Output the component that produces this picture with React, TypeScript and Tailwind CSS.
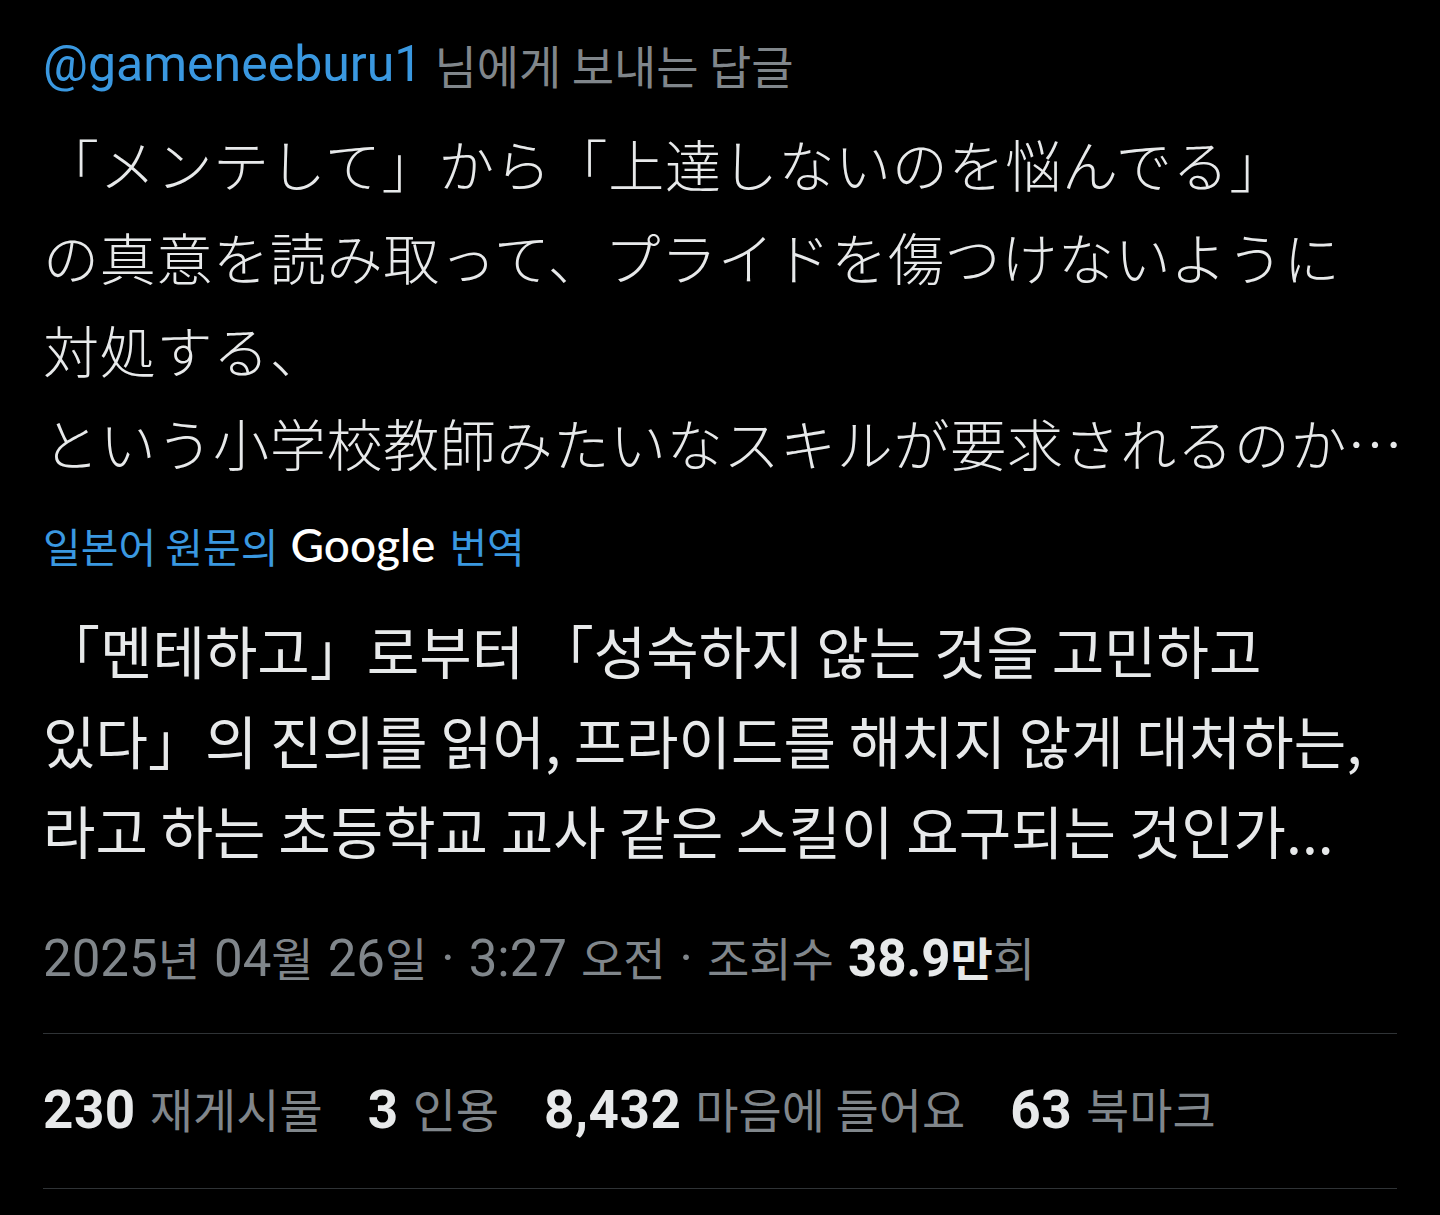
export default function App() {
  const jp = [
    "「メンテして」から「上達しないのを悩んでる」",
    "の真意を読み取って、プライドを傷つけないように",
    "対処する、",
    "という小学校教師みたいなスキルが要求されるのか…",
  ];
  const ko = [
    "「멘테하고」로부터 「성숙하지 않는 것을 고민하고",
    "있다」의 진의를 읽어, 프라이드를 해치지 않게 대처하는,",
    "라고 하는 초등학교 교사 같은 스킬이 요구되는 것인가...",
  ];
  const stats = [
    { n: "230", label: "재게시물" },
    { n: "3", label: "인용" },
    { n: "8,432", label: "마음에 들어요" },
    { n: "63", label: "북마크" },
  ];
  const num = "font-['Roboto',sans-serif] text-[51px]";
  const kr = "font-['Noto_Sans_CJK_KR',sans-serif] text-[46px]";
  return (
    <div className="min-h-[1215px] w-[1440px] bg-black px-[43px] pt-[36px] font-['Roboto','Noto_Sans_CJK_KR',sans-serif] text-[#e7e9ea]">
      <div className="flex items-center gap-[12px] leading-[56px]">
        <span className="text-[50px] text-[#3a98e0]">@gameneeburu1</span>
        <span className="font-['Noto_Sans_CJK_KR',sans-serif] text-[46px] text-[#80868b]">님에게 보내는 답글</span>
      </div>

      <div className="mt-[24px] font-['Noto_Sans_CJK_JP',sans-serif] text-[56px] font-light leading-[93px] tracking-[0.7px]">
        {jp.map((l) => (
          <div key={l} className="whitespace-nowrap">{l}</div>
        ))}
      </div>

      <div className="mt-[29px] flex items-center leading-[56px]">
        <span className="font-['Noto_Sans_CJK_KR',sans-serif] text-[41px] text-[#3a98e0]">일본어 원문의</span>
        <span className="ml-[12px] font-['Lato',sans-serif] text-[46px] font-medium text-white">Google</span>
        <span className="ml-[14px] font-['Noto_Sans_CJK_KR',sans-serif] text-[41px] text-[#3a98e0]">번역</span>
      </div>

      <div className="mt-[31px] font-['Noto_Sans_CJK_KR',sans-serif] text-[57px] leading-[90px]">
        {ko.map((l) => (
          <div key={l} className="whitespace-nowrap">{l}</div>
        ))}
      </div>

      <div className="mt-[54px] flex items-baseline leading-[56px] text-[#80868b]">
        <span className={num}>2025</span>
        <span className={kr}>년</span>
        <span className={`${num} ml-[14px]`}>04</span>
        <span className={kr}>월</span>
        <span className={`${num} ml-[14px]`}>26</span>
        <span className={kr}>일</span>
        <span className={`${num} mx-[14px]`}>·</span>
        <span className={num}>3:27</span>
        <span className={`${kr} ml-[14px]`}>오전</span>
        <span className={`${num} mx-[14px]`}>·</span>
        <span className={kr}>조회수</span>
        <span className={`${num} ml-[14px] font-bold text-[#e7e9ea]`}>38.9</span>
        <span className={`${kr} font-bold text-[#e7e9ea]`}>만</span>
        <span className={kr}>회</span>
      </div>

      <div className="mt-[46px] border-t border-[#2f3336]" />

      <div className="flex h-[154px] items-center gap-[45px]">
        {stats.map((s) => (
          <div key={s.label} className="flex items-baseline gap-[14px]">
            <span className="font-['Roboto',sans-serif] text-[53px] font-bold tracking-[0.5px] text-[#e7e9ea]">{s.n}</span>
            <span className="font-['Noto_Sans_CJK_KR',sans-serif] text-[47px] text-[#80868b]">{s.label}</span>
          </div>
        ))}
      </div>

      <div className="border-t border-[#2f3336]" />
    </div>
  );
}
